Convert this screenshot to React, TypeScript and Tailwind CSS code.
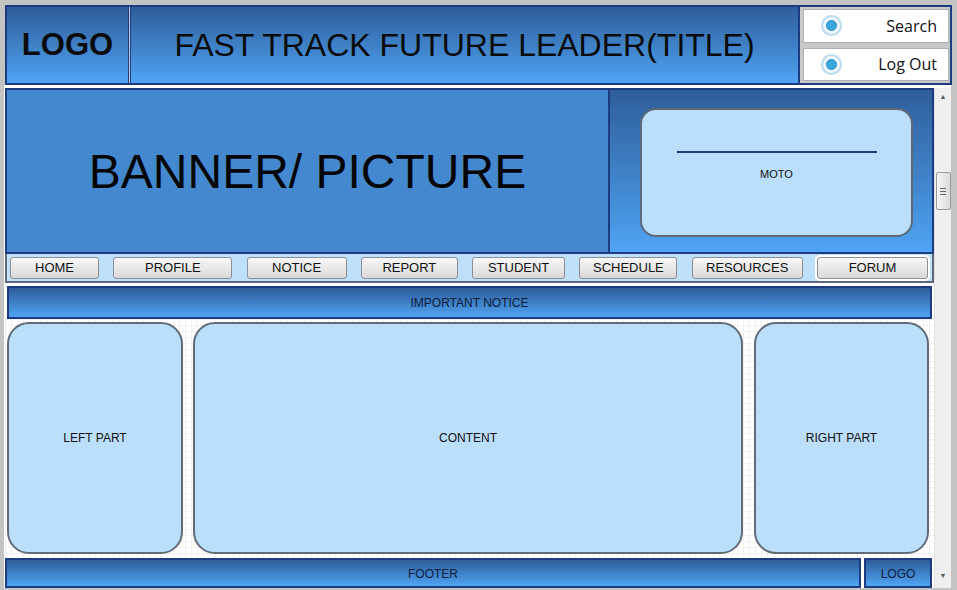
const grad = "bg-gradient-to-b from-[#2f5e9a] to-[#4fa4f4]";

const navItems = [
  { label: "HOME", w: "w-[89px]" },
  { label: "PROFILE", w: "w-[119px]" },
  { label: "NOTICE", w: "w-[100px]" },
  { label: "REPORT", w: "w-[97px]" },
  { label: "STUDENT", w: "w-[93px]" },
  { label: "SCHEDULE", w: "w-[98px]" },
  { label: "RESOURCES", w: "w-[111px]" },
  { label: "FORUM", w: "w-[111px]" },
];

function RadioButton({ label }: { label: string }) {
  return (
    <div className="flex-1 flex items-center justify-between bg-white border border-[#a9b0b8] pl-[17px] pr-[11px]">
      <span className="flex items-center justify-center w-[21px] h-[21px] rounded-full border-2 border-[#b9dcef] bg-[#eef7fc]">
        <span className="w-[11px] h-[11px] rounded-full bg-[#3aa7de] border border-[#2c8fc4]" />
      </span>
      <span className="text-[16px] text-[#111]" style={{ fontFamily: '"Open Sans", "Noto Sans", sans-serif' }}>
        {label}
      </span>
    </div>
  );
}

function Panel({ label, className }: { label: string; className: string }) {
  return (
    <div
      className={`${className} flex items-center justify-center rounded-[22px] border-2 border-[#626c78] bg-[#bbdefb] text-[12px] text-[#111]`}
    >
      {label}
    </div>
  );
}

export default function App() {
  return (
    <div
      className="w-[957px] h-[590px] bg-[#c3c3c3] flex flex-col pl-[4px] pr-[6px] pt-[5px] pb-[2px] overflow-hidden"
      style={{ fontFamily: '"Liberation Sans", Arial, sans-serif' }}
    >
      {/* header */}
      <div className="h-[80px] ml-[1px] mr-[-1px] flex border-2 border-[#1c3b80] bg-[#1c3b80] shrink-0">
        <div className={`w-[121px] flex items-center justify-center ${grad} text-[31px] font-bold text-[#0b0b0b]`}>
          LOGO
        </div>
        <div className="w-[3px] bg-[#c9d0de] border-x border-[#1c3b80]" />
        <div className={`flex-1 flex items-center justify-center ${grad} text-[32px] text-[#0b0b0b]`}>
          FAST TRACK FUTURE LEADER(TITLE)
        </div>
        <div className="w-[150px] ml-[2px] bg-[#c9c9c9] flex flex-col gap-[5px] pl-[3px] pr-[1px] py-[2px]">
          <RadioButton label="Search" />
          <RadioButton label="Log Out" />
        </div>
      </div>
      <div className="h-[3px] bg-white shrink-0" />

      {/* main scroll area */}
      <div className="flex-1 flex bg-white min-h-0">
        <div className="flex-1 flex flex-col pl-[1px] min-w-0">
          {/* banner */}
          <div className="h-[166px] flex border-2 border-[#1c3b80] shrink-0">
            <div className="w-[603px] flex items-center justify-center bg-[#4488cf] border-r-2 border-[#1c3b80] text-[48px] text-[#050505] pt-[2px]">
              BANNER/ PICTURE
            </div>
            <div className={`flex-1 flex items-start justify-end pt-[18px] pr-[19px] ${grad}`}>
              <div className="w-[273px] h-[129px] rounded-[16px] border-2 border-[#5d6a78] bg-[#bbdefb] flex flex-col items-center pt-[41px]">
                <div className="w-[200px] h-[2px] bg-[#1c3b80]" />
                <div className="mt-[13px] text-[11px] text-[#111]">MOTO</div>
              </div>
            </div>
          </div>

          {/* nav */}
          <div className="h-[29px] flex items-center justify-between bg-[#bfe0fb] border-2 border-t-0 border-[#5f6a78] pl-[3px] pr-[4px] shrink-0">
            {navItems.map((n) => (
              <div
                key={n.label}
                className={`${n.w} h-[22px] flex items-center justify-center rounded-[3px] border border-[#8c8f94] bg-gradient-to-b from-[#f7f7f7] to-[#d9d9d9] text-[13px] text-[#111] ${
                  n.label === "FORUM" ? "outline-2 outline-white" : ""
                }`}
              >
                {n.label}
              </div>
            ))}
          </div>

          {/* notice */}
          <div className="h-[33px] mt-[3px] mx-[2px] flex items-center justify-center border-2 border-[#1c3b80] text-[12px] text-[#0e1c3a] shrink-0 bg-gradient-to-b from-[#2f5e9a] to-[#4fa4f4]">
            IMPORTANT NOTICE
          </div>

          {/* panels */}
          <div
            className="flex-1 flex pt-[3px] pb-[4px] pl-[2px] pr-[5px] min-h-0"
            style={{
              backgroundImage:
                "linear-gradient(to right, #f1f1f1 1px, transparent 1px), linear-gradient(to bottom, #f1f1f1 1px, transparent 1px)",
              backgroundSize: "6px 6px",
            }}
          >
            <Panel label="LEFT PART" className="w-[176px] shrink-0" />
            <Panel label="CONTENT" className="flex-1 ml-[10px]" />
            <Panel label="RIGHT PART" className="w-[175px] shrink-0 ml-[11px]" />
          </div>

          {/* footer */}
          <div className="h-[30px] flex gap-[3px] shrink-0 pr-[2px]">
            <div className={`flex-1 flex items-center justify-center border-2 border-[#1c3b80] ${grad} text-[12px] text-[#0e1c3a] pt-[2px]`}>
              FOOTER
            </div>
            <div className={`w-[68px] flex items-center justify-center border-2 border-[#1c3b80] ${grad} text-[12px] text-[#0e1c3a] pt-[2px]`}>
              LOGO
            </div>
          </div>
        </div>

        {/* scrollbar */}
        <div className="w-[17px] bg-[#efefef] flex flex-col items-center border-l border-[#e2e2e2]">
          <div className="h-[17px] flex items-center justify-center text-[7px] text-[#555] mt-[1px]">▲</div>
          <div className="h-[66px]" />
          <div className="w-[15px] h-[38px] rounded-[2px] border border-[#9a9a9a] bg-gradient-to-r from-[#f4f4f4] to-[#dcdcdc] flex flex-col items-center justify-center gap-[2px]">
            <div className="w-[6px] h-px bg-[#666]" />
            <div className="w-[6px] h-px bg-[#666]" />
            <div className="w-[6px] h-px bg-[#666]" />
          </div>
          <div className="flex-1" />
          <div className="h-[17px] flex items-center justify-center text-[7px] text-[#555] mb-[3px]">▼</div>
        </div>
      </div>
    </div>
  );
}
